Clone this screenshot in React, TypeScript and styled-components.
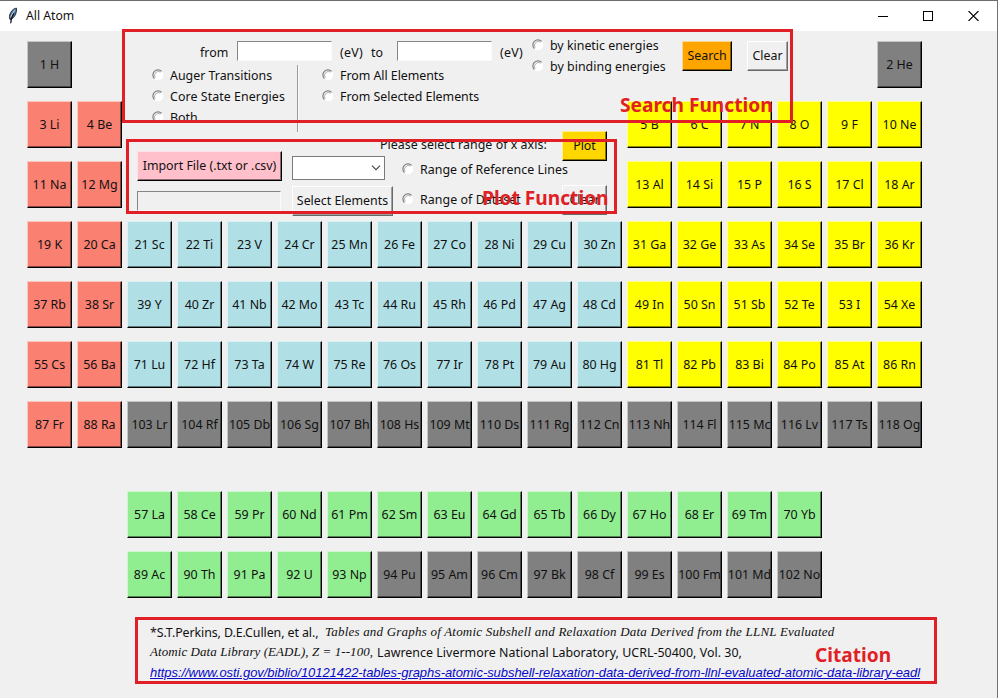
import React from "react";
import styled, { createGlobalStyle, css } from "styled-components";

const UI_FONT = '"Noto Sans", "Open Sans", sans-serif';
const MARK = "#e01f26";

const GlobalStyle = createGlobalStyle`
  body { margin: 0; background: #f0f0f0; }
  * { box-sizing: border-box; }
`;

const Window = styled.main`
  position: relative;
  width: 998px;
  height: 698px;
  overflow: hidden;
  background: #f0f0f0;
  border-top: 1px solid #6e6c6e;
  border-right: 1px solid #6f7378;
  font: 12.4px/20px ${UI_FONT};
  color: #111;
`;

const TitleBar = styled.header`
  display: flex;
  align-items: center;
  height: 30px;
  padding-left: 6px;
  background: #fff;
`;

const Title = styled.h1`
  flex: 1;
  margin: 0 0 0 6px;
  font-size: 12.2px;
  font-weight: 400;
`;

const WindowButton = styled.span`
  display: flex;
  justify-content: center;
  width: 45.5px;
`;

const Table = styled.section`
  display: grid;
  grid-template-columns: repeat(18, 50px);
  grid-template-rows: repeat(7, 60px) 30px repeat(2, 60px);
  margin: 10px 0 0 27px;
`;

const bevel = css`
  border-style: solid;
  border-width: 1px;
  border-color: rgba(255, 255, 255, 0.55) #000 #000 rgba(255, 255, 255, 0.55);
  box-shadow: inset -1px -1px 0 rgba(0, 0, 0, 0.45);
  background-clip: border-box;
`;

type Family = "alkali" | "metal" | "main" | "rare" | "inactive";
const FAMILY_COLOR: Record<Family, string> = {
  alkali: "#fa8072",
  metal: "#b0e0e6",
  main: "#ffff00",
  rare: "#90ee90",
  inactive: "#808080",
};

const ElementButton = styled.button<{ $family: Family; $col: number; $row: number }>`
  grid-column: ${(p) => p.$col};
  grid-row: ${(p) => p.$row};
  display: flex;
  align-items: center;
  justify-content: center;
  width: 45px;
  height: 47px;
  padding: 1px 0 0;
  overflow: hidden;
  font: 12.4px/20px ${UI_FONT};
  white-space: nowrap;
  color: #111;
  background: ${(p) => FAMILY_COLOR[p.$family]};
  ${bevel}
`;

const CommandButton = styled.button<{ $w: number; $bg?: string }>`
  display: flex;
  flex: none;
  align-items: center;
  justify-content: center;
  width: ${(p) => p.$w}px;
  height: 30px;
  padding: 0;
  font: 12.4px/20px ${UI_FONT};
  white-space: nowrap;
  color: #111;
  background: ${(p) => p.$bg ?? "#f0f0f0"};
  ${bevel}
  ${(p) =>
    !p.$bg &&
    css`
      border-color: #fff #696969 #696969 #fff;
      box-shadow: inset -1px -1px 0 #a0a0a0;
    `}
`;

const SearchPanel = styled.div`
  grid-column: 3 / 17;
  grid-row: 1 / 3;
  height: 92px;
`;

const SearchTop = styled.div`
  display: flex;
  height: 24px;
  padding-left: 73px;
`;

const Label = styled.span<{ $w?: number; $ml?: number; $tracking?: number }>`
  flex: none;
  width: ${(p) => (p.$w ? `${p.$w}px` : "auto")};
  margin-left: ${(p) => p.$ml ?? 0}px;
  letter-spacing: ${(p) => p.$tracking ?? 0}px;
  white-space: nowrap;
`;

const RangeLabel = styled(Label)`
  padding-top: 2px;
`;

const Entry = styled.span<{ $w: number; $readOnly?: boolean }>`
  flex: none;
  width: ${(p) => p.$w}px;
  height: 20px;
  border: 1px solid;
  border-color: #868686 #fbfbfb #fbfbfb #868686;
  background: ${(p) => (p.$readOnly ? "#f0f0f0" : "#fff")};
`;

const EnergyKind = styled.div`
  flex: none;
  width: 150px;
  margin: -6px 0 0 2px;
`;

const RadioRow = styled.label<{ $h?: number }>`
  display: flex;
  align-items: center;
  gap: 6px;
  height: ${(p) => p.$h ?? 21}px;
  svg { flex: none; margin-top: -2px; }
`;

const SearchOptions = styled.div`
  display: flex;
  padding-left: 25px;
`;

const OptionColumn = styled.div`
  width: 145px;
`;

const Divider = styled.div`
  flex: none;
  width: 2px;
  height: 67px;
  margin-right: 23px;
  background: linear-gradient(90deg, #9c9c9c 50%, #fafafa 50%);
`;

const Spacer = styled.div`
  flex: none;
  width: 15px;
`;

const PlotPanel = styled.div`
  grid-column: 3 / 13;
  grid-row: 2 / 4;
  display: grid;
  grid-template-columns: 155px 88px 182px 45px;
  height: 84px;
  margin-top: 30px;
  padding-left: 10px;
`;

const ImportColumn = styled.div`
  display: flex;
  flex-direction: column;
  gap: 10px;
  padding-top: 20px;
`;

const SelectColumn = styled.div`
  display: flex;
  flex-direction: column;
  gap: 6px;
  padding-top: 25px;
`;

const Combo = styled.div`
  display: flex;
  align-items: center;
  justify-content: flex-end;
  width: 93px;
  height: 24px;
  padding-right: 3px;
  border: 1px solid #7a7a7a;
  background: #fff;
`;

const AxisColumn = styled.div`
  padding-top: 4px;
`;

const AxisChoices = styled.div`
  padding-left: 22px;
`;

const PlotColumn = styled.div`
  display: flex;
  flex-direction: column;
  gap: 24px;
`;

const Citation = styled.footer`
  width: 802px;
  height: 67px;
  margin: 6px 0 0 135px;
  padding: 3px 12px 0;
  border: 3px solid ${MARK};
`;

const CitationLine = styled.p`
  display: flex;
  margin: 0;
  height: 20px;
  white-space: nowrap;
`;

const WorkTitle = styled.cite<{ $tracking: number }>`
  margin-top: -1px;
  font: italic 13px/20px "Liberation Serif", serif;
  letter-spacing: ${(p) => p.$tracking}px;
`;

const SourceLink = styled.a`
  font: italic 13px/20px "Liberation Sans", sans-serif;
  letter-spacing: -0.055px;
  color: #0808c8;
  text-decoration: underline;
`;

const CalloutFrame = styled.div<{ $x: number; $y: number; $w: number; $h: number }>`
  position: absolute;
  left: ${(p) => p.$x}px;
  top: ${(p) => p.$y - 1}px;
  width: ${(p) => p.$w}px;
  height: ${(p) => p.$h}px;
  border: 3px solid ${MARK};
  pointer-events: none;
`;

const CalloutText = styled.strong<{ $x: number; $y: number }>`
  position: absolute;
  left: ${(p) => p.$x}px;
  top: ${(p) => p.$y - 1}px;
  font: bold 19.15px/24px ${UI_FONT};
  white-space: nowrap;
  color: ${MARK};
`;

const FeatherIcon = () => (
  <svg width="14" height="18" viewBox="0 0 14 18">
    <path d="M10.500 1.200C7.500 1.400 4.800 4.200 3.700 8.200c-.5 2-.2 3.200.3 4.300 2.200-.5 4.300-2.300 5.400-4.900.9-2.200 1.300-4.400 1.100-6.400z" fill="#4d7396" stroke="#1a2634" strokeWidth="1" />
    <path d="M9 3C7 5.500 5.500 8 4.800 10.500" stroke="#b9d3ea" strokeWidth="1.100" fill="none" />
    <path d="M7.800 6.300C5.900 9 5 12 4.700 16.300" stroke="#0d1118" strokeWidth="1.200" fill="none" />
  </svg>
);

const RadioIcon = () => (
  <svg width="12" height="12" viewBox="0 0 12 12">
    <circle cx="6" cy="6" r="5.200" fill="#fff" />
    <path d="M2.400 9.600A5 5 0 0 1 9.600 2.400" fill="none" stroke="#7c7c7c" strokeWidth="1.200" />
    <path d="M3.100 8.600A4 4 0 0 1 8.600 3.100" fill="none" stroke="#8e8e8e" strokeWidth=".7" />
  </svg>
);

const Radio = ({ children, h, tracking }: { children: string; h?: number; tracking?: number }) => (
  <RadioRow $h={h}>
    <RadioIcon />
    <Label $tracking={tracking}>{children}</Label>
  </RadioRow>
);

const NAMES =
  "H He Li Be B C N O F Ne Na Mg Al Si P S Cl Ar K Ca Sc Ti V Cr Mn Fe Co Ni Cu Zn Ga Ge As Se Br Kr Rb Sr Y Zr Nb Mo Tc Ru Rh Pd Ag Cd In Sn Sb Te I Xe Cs Ba La Ce Pr Nd Pm Sm Eu Gd Tb Dy Ho Er Tm Yb Lu Hf Ta W Re Os Ir Pt Au Hg Tl Pb Bi Po At Rn Fr Ra Ac Th Pa U Np Pu Am Cm Bk Cf Es Fm Md No Lr Rf Db Sg Bh Hs Mt Ds Rg Cn Nh Fl Mc Lv Ts Og".split(" ");

// [first atomic number, last atomic number, grid row, first grid column]
const RUNS: [number, number, number, number][] = [
  [1, 1, 1, 1], [2, 2, 1, 18],
  [3, 4, 2, 1], [5, 10, 2, 13],
  [11, 12, 3, 1], [13, 18, 3, 13],
  [19, 36, 4, 1],
  [37, 54, 5, 1],
  [55, 56, 6, 1], [71, 86, 6, 3],
  [87, 88, 7, 1], [103, 118, 7, 3],
  [57, 70, 9, 3],
  [89, 102, 10, 3],
];

const familyOf = (z: number, row: number, col: number): Family => {
  if (z <= 2 || z >= 94) return "inactive";
  if (row >= 9) return "rare";
  if (col <= 2) return "alkali";
  return col >= 13 ? "main" : "metal";
};

const ELEMENTS = RUNS.flatMap(([from, to, row, start]) =>
  Array.from({ length: to - from + 1 }, (_, i) => {
    const z = from + i;
    const col = start + i;
    return { z, row, col, family: familyOf(z, row, col) };
  }),
);

export default function App() {
  return (
    <Window>
      <GlobalStyle />
      <TitleBar>
        <FeatherIcon />
        <Title>All Atom</Title>
        <WindowButton>
          <svg width="10" height="10"><path d="M0 5.500h10" stroke="#000" /></svg>
        </WindowButton>
        <WindowButton>
          <svg width="11" height="10"><rect x=".5" y=".5" width="9" height="9" fill="none" stroke="#000" /></svg>
        </WindowButton>
        <WindowButton>
          <svg width="12" height="10"><path d="M.5 0l10 10M10.500 0l-10 10" stroke="#000" strokeWidth="1.100" /></svg>
        </WindowButton>
      </TitleBar>

      <Table>
        <SearchPanel>
          <SearchTop>
            <RangeLabel $w={37}>from</RangeLabel>
            <Entry $w={95} />
            <RangeLabel $ml={8} $w={31} $tracking={0.3}>(eV)</RangeLabel>
            <RangeLabel $w={26}>to</RangeLabel>
            <Entry $w={95} />
            <RangeLabel $ml={8} $w={30} $tracking={0.3}>(eV)</RangeLabel>
            <EnergyKind>
              <Radio>by kinetic energies</Radio>
              <Radio tracking={0.03}>by binding energies</Radio>
            </EnergyKind>
            <CommandButton $w={50} $bg="#ffa500">Search</CommandButton>
            <Spacer />
            <CommandButton $w={41}>Clear</CommandButton>
          </SearchTop>
          <SearchOptions>
            <OptionColumn>
              <Radio>Auger Transitions</Radio>
              <Radio tracking={0.07}>Core State Energies</Radio>
              <Radio>Both</Radio>
            </OptionColumn>
            <Divider />
            <OptionColumn>
              <Radio tracking={-0.04}>From All Elements</Radio>
              <Radio tracking={-0.02}>From Selected Elements</Radio>
            </OptionColumn>
          </SearchOptions>
        </SearchPanel>

        <PlotPanel>
          <ImportColumn>
            <CommandButton $w={145} $bg="#ffc0cb">Import File (.txt or .csv)</CommandButton>
            <Entry $w={144} $readOnly />
          </ImportColumn>
          <SelectColumn>
            <Combo>
              <svg width="10" height="6"><path d="M1 .7l4 4 4-4" fill="none" stroke="#444" strokeWidth="1.100" /></svg>
            </Combo>
            <CommandButton $w={101}>Select Elements</CommandButton>
          </SelectColumn>
          <AxisColumn>
            <Label $tracking={0.04}>Please select range of x axis:</Label>
            <AxisChoices>
              <Radio h={30} tracking={0.04}>Range of Reference Lines</Radio>
              <Radio h={30} tracking={0.06}>Range of Dataset</Radio>
            </AxisChoices>
          </AxisColumn>
          <PlotColumn>
            <CommandButton $w={45} $bg="#ffd700">Plot</CommandButton>
            <CommandButton $w={45}>Clear</CommandButton>
          </PlotColumn>
        </PlotPanel>

        {ELEMENTS.map(({ z, row, col, family }) => (
          <ElementButton key={z} $row={row} $col={col} $family={family}>
            {z} {NAMES[z - 1]}
          </ElementButton>
        ))}
      </Table>

      <Citation>
        <CitationLine>
          <Label $w={175} $tracking={-0.08}>*S.T.Perkins, D.E.Cullen, et al.,</Label>
          <WorkTitle $tracking={0.205}>
            Tables and Graphs of Atomic Subshell and Relaxation Data Derived from the LLNL Evaluated
          </WorkTitle>
        </CitationLine>
        <CitationLine>
          <WorkTitle $tracking={0.07}>Atomic Data Library (EADL), Z = 1--100,</WorkTitle>
          <Label $ml={4} $tracking={0.04}>Lawrence Livermore National Laboratory, UCRL-50400, Vol. 30,</Label>
        </CitationLine>
        <CitationLine>
          <SourceLink>
            https://www.osti.gov/biblio/10121422-tables-graphs-atomic-subshell-relaxation-data-derived-from-llnl-evaluated-atomic-data-library-eadl
          </SourceLink>
        </CitationLine>
      </Citation>

      <CalloutFrame $x={122} $y={29} $w={671} $h={94} />
      <CalloutFrame $x={126} $y={139} $w={491} $h={75} />
      <CalloutText $x={620} $y={93}>Search Function</CalloutText>
      <CalloutText $x={482} $y={186}>Plot Function</CalloutText>
      <CalloutText $x={815} $y={643}>Citation</CalloutText>
    </Window>
  );
}
